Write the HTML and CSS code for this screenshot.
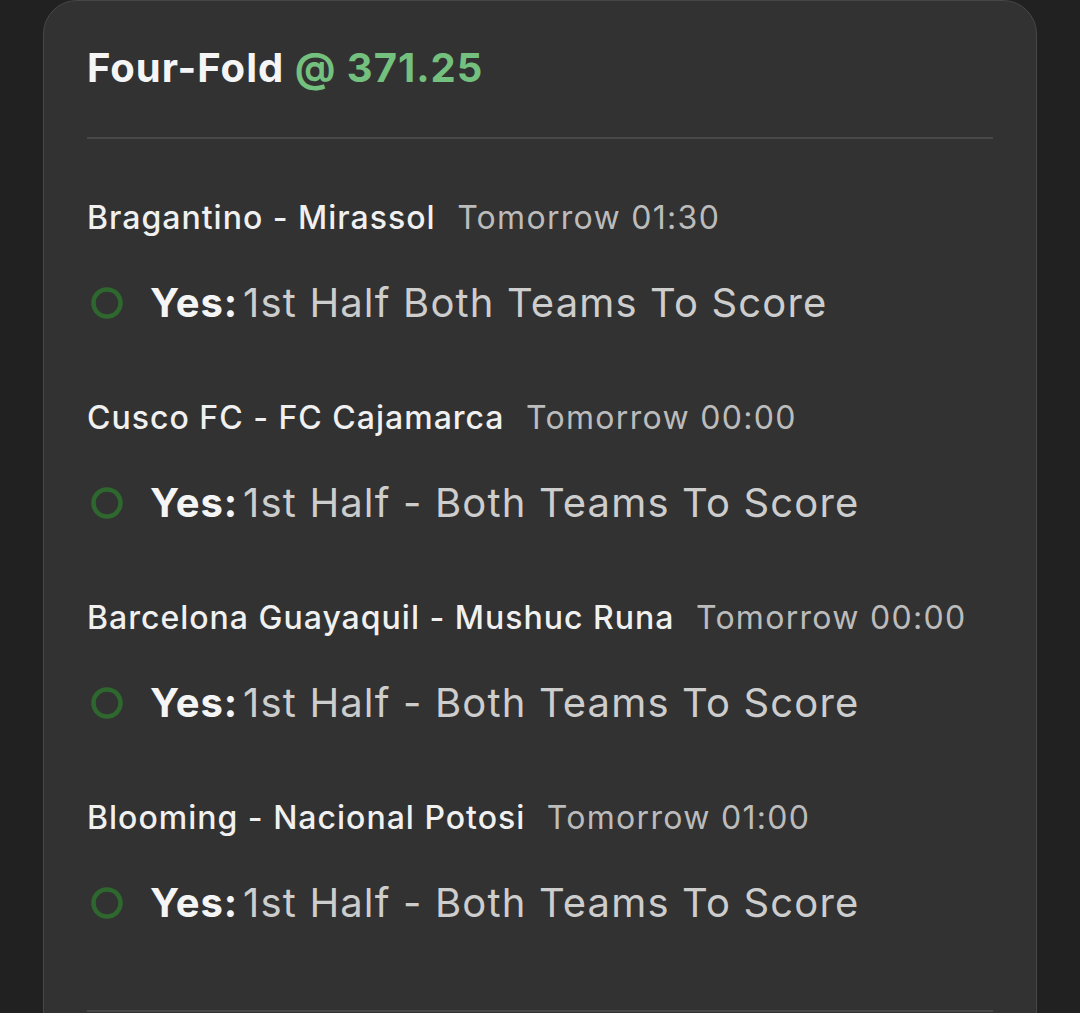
FILE: index.html
```html
<!DOCTYPE html>
<html lang="en">
<head>
  <meta charset="UTF-8">
  <meta name="viewport" content="width=device-width, initial-scale=1.0">
  <title>Four-Fold</title>
  <link rel="stylesheet" href="styles.css">
</head>
<body>
  <div class="card">
    <h1 class="title">Four-Fold <span class="odds">@ 371.25</span></h1>

    <div class="legs">
      <!-- Leg 1 -->
      <div class="leg">
        <p class="match">Bragantino - Mirassol <span class="time">Tomorrow 01:30</span></p>
        <p class="pick">
          <svg class="status" viewBox="0 0 32 32"><circle cx="16" cy="16" r="13.5"/></svg>
          <span class="pick-text"><b>Yes:</b>1st Half Both Teams To Score</span>
        </p>
      </div>

      <!-- Leg 2 -->
      <div class="leg">
        <p class="match">Cusco FC - FC Cajamarca <span class="time">Tomorrow 00:00</span></p>
        <p class="pick">
          <svg class="status" viewBox="0 0 32 32"><circle cx="16" cy="16" r="13.5"/></svg>
          <span class="pick-text"><b>Yes:</b>1st Half - Both Teams To Score</span>
        </p>
      </div>

      <!-- Leg 3 -->
      <div class="leg">
        <p class="match">Barcelona Guayaquil - Mushuc Runa <span class="time">Tomorrow 00:00</span></p>
        <p class="pick">
          <svg class="status" viewBox="0 0 32 32"><circle cx="16" cy="16" r="13.5"/></svg>
          <span class="pick-text"><b>Yes:</b>1st Half - Both Teams To Score</span>
        </p>
      </div>

      <!-- Leg 4 -->
      <div class="leg">
        <p class="match">Blooming - Nacional Potosi <span class="time">Tomorrow 01:00</span></p>
        <p class="pick">
          <svg class="status" viewBox="0 0 32 32"><circle cx="16" cy="16" r="13.5"/></svg>
          <span class="pick-text"><b>Yes:</b>1st Half - Both Teams To Score</span>
        </p>
      </div>
    </div>

    <div class="footer-line"></div>
  </div>
</body>
</html>
```

FILE: styles.css
```css
body {
  margin: 0;
  padding: 0;
  background-color: #212121;
  font-family: Inter, 'Noto Sans', sans-serif;
  color: #f2f2f2;
  overflow: hidden;
}
.card {
  margin: 0 43px;
  padding: 0 43px 40px;
  background: #323232;
  border: 1px solid #474747;
  border-radius: 34px;
}
.title {
  margin: 0;
  padding: 43px 0 45px;
  font-size: 40px;
  line-height: 48px;
  font-weight: 700;
  letter-spacing: 1px;
  color: #f5f5f5;
  border-bottom: 2px solid #484848;
}
.odds {
  color: #74c07e;
}
.legs {
  display: flex;
  flex-direction: column;
  gap: 72px;
  padding-top: 59px;
}
.leg {
  display: flex;
  flex-direction: column;
  gap: 42px;
}
.match {
  margin: 0;
  font-size: 32px;
  line-height: 40px;
  font-weight: 500;
  letter-spacing: 1px;
  color: #f0f0f0;
}
.time {
  margin-left: 12px;
  font-weight: 400;
  letter-spacing: 1.3px;
  color: #bcbcbc;
}
.pick {
  margin: 0;
  display: flex;
  align-items: center;
  height: 46px;
}
.pick-text {
  font-size: 40px;
  line-height: 46px;
  letter-spacing: 1.15px;
  color: #cdcdcd;
  white-space: nowrap;
}
.pick-text b {
  margin-right: 5px;
  font-weight: 700;
  letter-spacing: 0.9px;
  color: #f5f5f5;
}
.status {
  flex: none;
  width: 32px;
  height: 32px;
  margin: 0 27px 0 4px;
  fill: none;
  stroke: #2e682e;
  stroke-width: 4.5;
}
.footer-line {
  margin-top: 84px;
  border-top: 2px solid #484848;
}
```
